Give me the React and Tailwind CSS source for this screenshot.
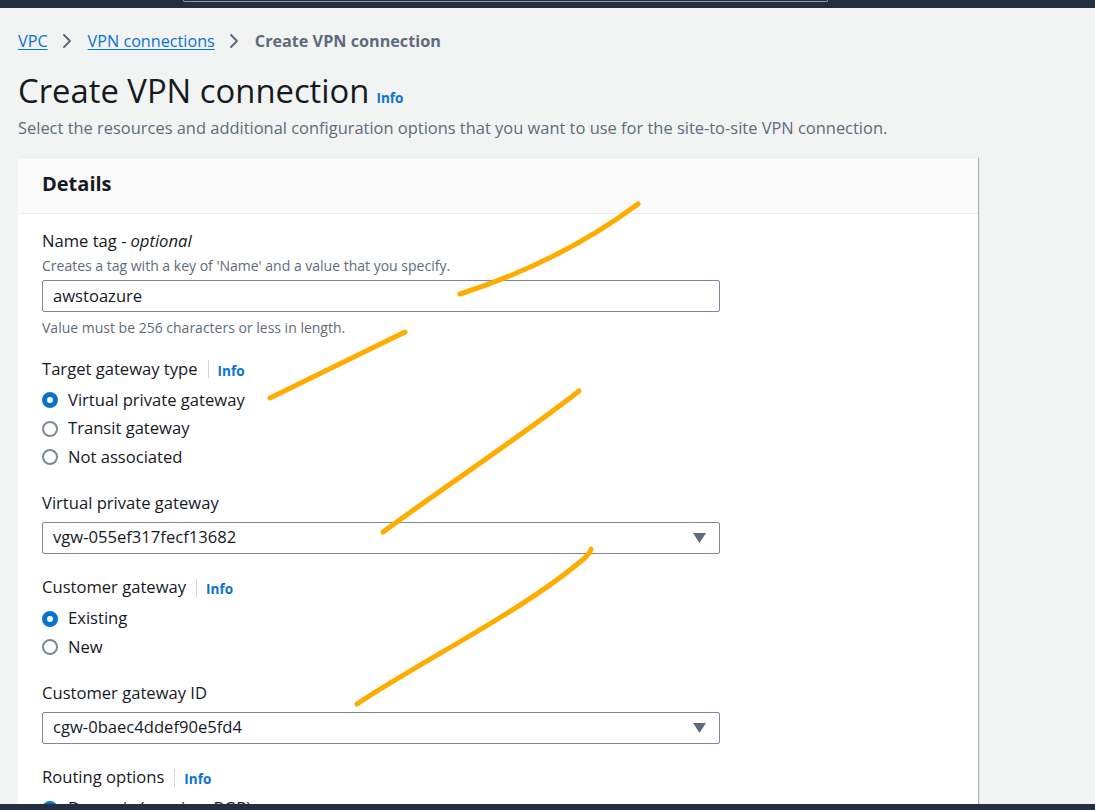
import React from "react";

const Info = () => (
  <span className="text-[13.5px] font-bold text-[#0972d3] leading-none">Info</span>
);

function Chevron() {
  return (
    <svg width="10" height="16" viewBox="0 0 10 16" className="ml-[14px] mr-[16px]">
      <path d="M2 2 L8 8 L2 14" fill="none" stroke="#5f6b7a" strokeWidth="2" strokeLinecap="round" strokeLinejoin="round" />
    </svg>
  );
}

function LabelWithInfo({ text, className = "" }) {
  return (
    <div className={"flex items-center h-[22px] text-[16.6px] text-[#16191f] " + className}>
      <span>{text}</span>
      <span className="ml-[10px] mr-[9px] w-px h-[18px] bg-[#d1d5db]" />
      <span className="mt-[2px]">
        <Info />
      </span>
    </div>
  );
}

function Radio({ label, checked }) {
  return (
    <div className="flex items-center h-[28.5px]">
      {checked ? (
        <span className="w-4 h-4 rounded-full border-[5px] border-[#0972d3] bg-white" />
      ) : (
        <span className="w-4 h-4 rounded-full border-2 border-[#7d8998] bg-white" />
      )}
      <span className="ml-[10px] text-[16.6px] text-[#16191f]">{label}</span>
    </div>
  );
}

function Select({ value, className = "" }) {
  return (
    <div
      className={
        "w-[678px] h-[32px] border border-[#7d8998] rounded-[2px] flex items-center justify-between pl-[10px] pr-[13px] text-[16.6px] text-[#16191f] " +
        className
      }
    >
      <span>{value}</span>
      <svg width="13" height="10" viewBox="0 0 13 10">
        <path d="M0 0 L13 0 L6.5 10 Z" fill="#5f6b7a" />
      </svg>
    </div>
  );
}

export default function App() {
  return (
    <div className="relative h-[810px] w-full overflow-hidden flex flex-col bg-[#f2f3f3] font-['Open_Sans',sans-serif]">
      {/* top nav edge */}
      <div className="h-[8px] bg-[#232f3e] shrink-0">
        <div className="ml-[183px] w-[645px] h-[2px] border-b border-x border-[#8d99a8] rounded-b-[2px]" />
      </div>

      <div className="flex-1 overflow-hidden px-[18px] pt-[21px]">
        {/* breadcrumb */}
        <div className="flex items-center h-[24px] text-[16.2px]">
          <span className="text-[#0972d3] underline underline-offset-2">VPC</span>
          <Chevron />
          <span className="text-[#0972d3] underline underline-offset-2">VPN connections</span>
          <Chevron />
          <span className="text-[#5f6b7a] font-bold">Create VPN connection</span>
        </div>

        <div className="mt-[18px] flex items-end h-[40px]">
          <h1 className="text-[32.8px] leading-[40px] text-[#16191f]">Create VPN connection</h1>
          <span className="ml-[7px] mb-[2px]">
            <Info />
          </span>
        </div>
        <p className="mt-[6px] text-[16.45px] leading-[22px] text-[#5f6b7a]">
          Select the resources and additional configuration options that you want to use for the site-to-site VPN connection.
        </p>

        {/* details panel */}
        <div className="mt-[18px] w-[960px] bg-white border-t border-[#eaeded] shadow-[1px_1px_1px_rgba(0,28,36,0.3)]">
          <div className="h-[56px] flex items-center px-[24px] bg-[#fafafa] border-b border-[#eaeded]">
            <h2 className="text-[20px] font-bold text-[#16191f] -mt-[3px]">Details</h2>
          </div>

          <div className="px-[24px] pt-[16px] pb-10">
            <div className="h-[22px] text-[16.6px] text-[#16191f] flex items-center">
              Name tag - <i className="ml-1">optional</i>
            </div>
            <div className="mt-[4px] h-[18px] text-[14px] text-[#5f6b7a] flex items-center">
              Creates a tag with a key of 'Name' and a value that you specify.
            </div>
            <div className="mt-[6px] w-[678px] h-[32px] border border-[#7d8998] rounded-[2px] flex items-center pl-[10px] text-[16.6px] text-[#16191f]">
              awstoazure
            </div>
            <div className="mt-[6px] h-[18px] text-[14px] text-[#5f6b7a] flex items-center">
              Value must be 256 characters or less in length.
            </div>

            <LabelWithInfo text="Target gateway type" className="mt-[22px]" />
            <div className="mt-[6px] flex flex-col">
              <Radio label="Virtual private gateway" checked />
              <Radio label="Transit gateway" />
              <Radio label="Not associated" />
            </div>

            <div className="mt-[21px] h-[22px] text-[16.6px] text-[#16191f] flex items-center">
              Virtual private gateway
            </div>
            <Select value="vgw-055ef317fecf13682" className="mt-[7px]" />

            <LabelWithInfo text="Customer gateway" className="mt-[23px]" />
            <div className="mt-[6px] flex flex-col">
              <Radio label="Existing" checked />
              <Radio label="New" />
            </div>

            <div className="mt-[21px] h-[22px] text-[16.6px] text-[#16191f] flex items-center">
              Customer gateway ID
            </div>
            <Select value="cgw-0baec4ddef90e5fd4" className="mt-[7px]" />

            <LabelWithInfo text="Routing options" className="mt-[23px]" />
            <div className="mt-[6px] flex flex-col">
              <Radio label="Dynamic (requires BGP)" checked />
              <Radio label="Static" />
            </div>
          </div>
        </div>
      </div>

      <div className="h-[6px] bg-[#232f3e] shrink-0" />

      {/* hand-drawn annotation strokes over the screenshot */}
      <svg className="absolute inset-0 pointer-events-none" width="1095" height="810" viewBox="0 0 1095 810">
        <g fill="none" stroke="#ffac00" strokeWidth="5" strokeLinecap="round" strokeLinejoin="round">
          <path d="M460 294 Q560 262 638 204" />
          <path d="M270 398 L405 332" />
          <path d="M383 532 C440 490 530 430 579 391" />
          <path d="M357 704 C420 662 520 612 580 562 Q590 554 591 549" />
        </g>
      </svg>
    </div>
  );
}
